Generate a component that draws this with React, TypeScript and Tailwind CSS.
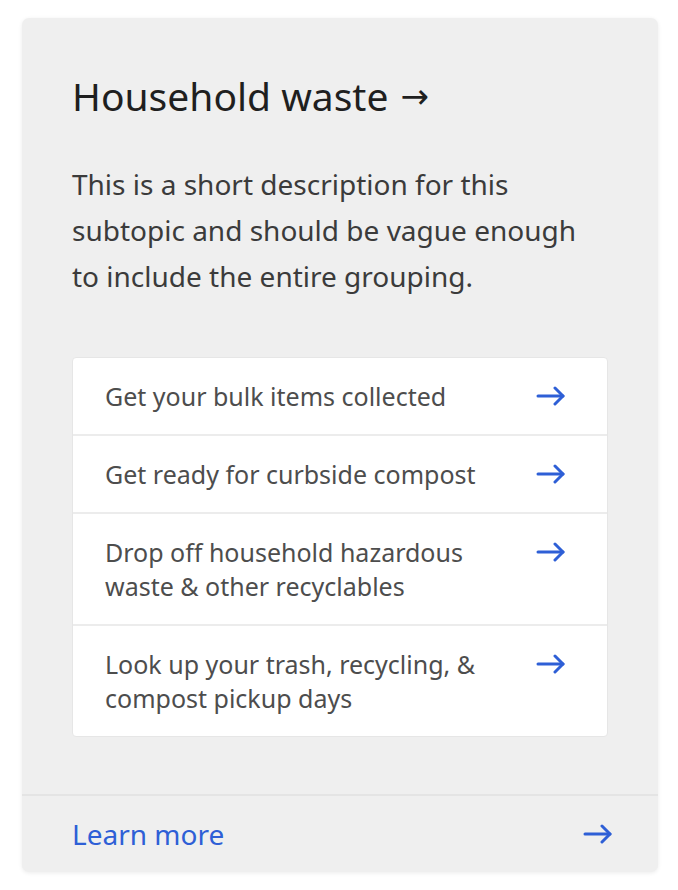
import { ReactNode } from 'react';

const links = [
  'Get your bulk items collected',
  'Get ready for curbside compost',
  'Drop off household hazardous waste & other recyclables',
  'Look up your trash, recycling, & compost pickup days',
];

function Arrow({ className }: { className?: string }) {
  return (
    <svg viewBox="0 0 30 20" className={className} fill="none" stroke="currentColor" strokeWidth="3" strokeLinecap="round" strokeLinejoin="round">
      <path d="M2 10h25" />
      <path d="M19 2l8 8-8 8" />
    </svg>
  );
}

function Row({ children, last }: { children: ReactNode; last?: boolean }) {
  return (
    <a
      href="#"
      className={`flex items-start justify-between gap-6 pl-[32px] pr-[41px] py-[21px] ${last ? '' : 'border-b-2 border-[#ececec]'}`}
    >
      <span className="text-[25px] leading-[34px] text-[#4d4d4d] max-w-[395px]">{children}</span>
      <Arrow className="w-[30px] h-[20px] mt-[7px] shrink-0 text-[#2e5fd6]" />
    </a>
  );
}

export default function App() {
  return (
    <main className="min-h-screen bg-white pt-[18px] px-[22px]" style={{ fontFamily: '"Noto Sans", "Open Sans", sans-serif' }}>
      <div className="w-[636px] bg-[#efefef] rounded-[7px] shadow-[0_1px_4px_rgba(0,0,0,0.08)]">
        <div className="pl-[50px] pr-[50px] pt-[56px] pb-[57px]">
          <h2 className="text-[39px] leading-[44px] text-[#1f1f1f] flex items-center">
            Household waste
            <span className="ml-[12px] font-['DejaVu_Sans'] text-[34px] leading-none">→</span>
          </h2>
          <p className="mt-[43px] text-[28px] leading-[46px] text-[#3b3b3b] max-w-[522px]">
            This is a short description for this subtopic and should be vague enough to include the entire grouping.
          </p>

          <div className="mt-[58px] bg-white rounded-[4px] border border-[#e6e6e6]">
            {links.map((l, i) => (
              <Row key={l} last={i === links.length - 1}>
                {l}
              </Row>
            ))}
          </div>
        </div>

        {/* footer link */}
        <a href="#" className="flex items-center justify-between border-t-2 border-[#e4e4e4] pl-[50px] pr-[45px] h-[78px]">
          <span className="text-[28px] text-[#2e5fd6]">Learn more</span>
          <Arrow className="w-[30px] h-[20px] text-[#2e5fd6]" />
        </a>
      </div>
    </main>
  );
}
